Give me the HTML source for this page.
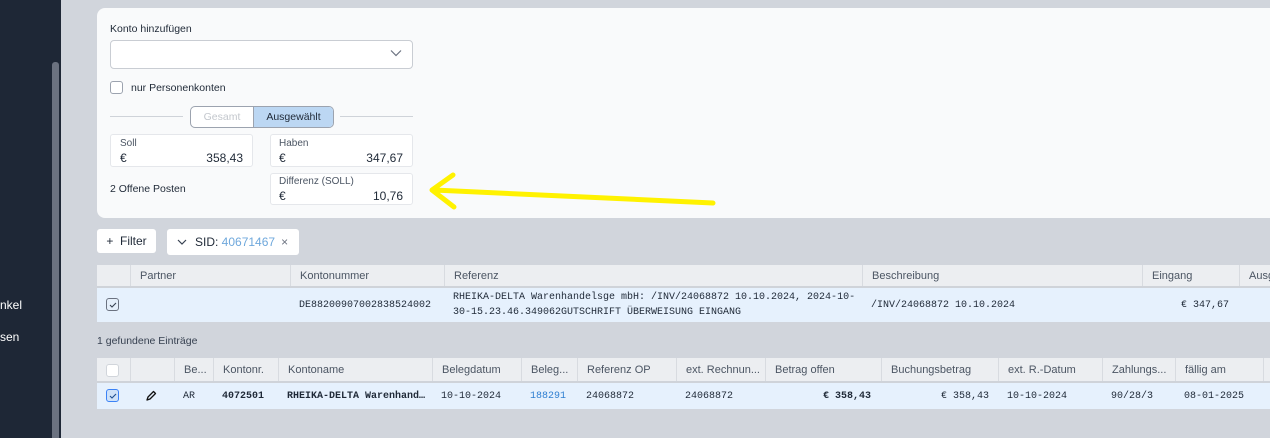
<!DOCTYPE html>
<html><head><meta charset="utf-8"><style>
*{box-sizing:border-box;margin:0;padding:0}
body{width:1270px;height:438px;overflow:hidden;background:#d1d5dc;font-family:"Liberation Sans",sans-serif;font-size:11px;color:#1f2937;position:relative}
.a{position:absolute}
.mono{font-family:"Liberation Mono",monospace;font-size:10px}
.sb{left:0;top:0;width:61px;height:438px;background:#1e2736}
.card{left:97px;top:8px;width:1190px;height:210px;background:#f9fafb;border-radius:8px}
.box{background:#fff;border:1px solid #e5e7eb;border-radius:3px}
.cb{width:13px;height:13px;border:1px solid #9ca3af;border-radius:3px;background:#fff}
.cb.on{background:#e5effa;border-color:#6b7280}
.th{background:#eceef1;border-bottom:2px solid #cfd3d9;height:100%}
.cell{position:absolute;top:0;height:100%;border-left:1px solid #d8dbe0;padding-left:9px;display:flex;align-items:center;color:#4b5563}
.row{background:#e6f1fd}
.rc{position:absolute;top:0;height:100%;display:flex;align-items:center;padding-left:9px}
</style></head><body>
<div class="a sb"></div>
<div class="a" style="left:52px;top:62px;width:7px;height:376px;background:#6b7280;border-radius:3px 3px 0 0"></div>
<div class="a" style="left:0;top:298px;color:#fff;font-size:12px">nkel</div>
<div class="a" style="left:0;top:330px;color:#fff;font-size:12px">sen</div>

<div class="a card"></div>
<div class="a" style="left:110px;top:23px;font-size:10.5px">Konto hinzufügen</div>
<div class="a box" style="left:110px;top:40px;width:303px;height:29px;border-color:#c9cdd3;border-radius:4px"></div>
<svg class="a" style="left:390px;top:49px" width="12" height="8"><path d="M1 1.5L6 6.5L11 1.5" fill="none" stroke="#6b7280" stroke-width="1.2"/></svg>
<div class="a cb" style="left:110px;top:81px"></div>
<div class="a" style="left:131px;top:82px;font-size:10.5px">nur Personenkonten</div>
<div class="a" style="left:110px;top:116px;width:73px;height:1px;background:#cfd3d9"></div>
<div class="a" style="left:340px;top:116px;width:73px;height:1px;background:#cfd3d9"></div>
<div class="a" style="left:190px;top:106px;width:144px;height:22px;border:1px solid #9ca3af;border-radius:5px;background:#fff;overflow:hidden;display:flex;font-size:10.5px">
<div style="width:62px;display:flex;align-items:center;justify-content:center;color:#c3c7cd">Gesamt</div>
<div style="flex:1;display:flex;align-items:center;justify-content:center;background:#bcd7f3;border-left:1px solid #9ca3af">Ausgewählt</div></div>
<div class="a box" style="left:110px;top:134px;width:143px;height:33px"></div>
<div class="a" style="left:120px;top:138px;font-size:10px;color:#4b5563">Soll</div>
<div class="a" style="left:120px;top:151px;font-size:12px">€</div>
<div class="a" style="left:180px;top:151px;width:63px;text-align:right;font-size:12px">358,43</div>
<div class="a box" style="left:270px;top:134px;width:143px;height:33px"></div>
<div class="a" style="left:279px;top:138px;font-size:10px;color:#4b5563">Haben</div>
<div class="a" style="left:279px;top:151px;font-size:12px">€</div>
<div class="a" style="left:340px;top:151px;width:63px;text-align:right;font-size:12px">347,67</div>
<div class="a box" style="left:270px;top:173px;width:143px;height:32px"></div>
<div class="a" style="left:279px;top:176px;font-size:10px;color:#4b5563">Differenz (SOLL)</div>
<div class="a" style="left:279px;top:189px;font-size:12px">€</div>
<div class="a" style="left:340px;top:189px;width:63px;text-align:right;font-size:12px">10,76</div>
<div class="a" style="left:110px;top:183px;font-size:10.5px">2 Offene Posten</div>
<svg class="a" style="left:420px;top:170px" width="300" height="45"><path d="M293 33L14 20M33 5L12 20L34 37" fill="none" stroke="#fff200" stroke-width="5" stroke-linecap="round" stroke-linejoin="round"/></svg>

<div class="a" style="left:97px;top:229px;width:59px;height:24px;background:#fff;border-radius:3px;display:flex;align-items:center;justify-content:center;font-size:12px">+&nbsp;&nbsp;Filter</div>
<div class="a" style="left:167px;top:229px;width:132px;height:26px;background:#fff;border-radius:3px;display:flex;align-items:center;padding-left:10px;font-size:12px"><svg width="10" height="7" style="margin-right:8px"><path d="M1 1L5 5L9 1" fill="none" stroke="#374151" stroke-width="1.2"/></svg>SID:&nbsp;<span style="color:#6fa8dc">40671467</span><span style="margin-left:6px;color:#6b7280">×</span></div>

<div class="a th" style="left:97px;top:265px;width:1173px;height:23px">
<div class="cell" style="left:33px">Partner</div><div class="cell" style="left:193px">Kontonummer</div><div class="cell" style="left:347px">Referenz</div><div class="cell" style="left:765px">Beschreibung</div><div class="cell" style="left:1045px">Eingang</div><div class="cell" style="left:1142px">Ausg</div></div>
<div class="a row" style="left:97px;top:288px;width:1173px;height:34px">
<div class="a cb on" style="left:9px;top:10px"></div><svg class="a" style="left:12px;top:14px" width="8" height="6"><path d="M1 3L3 5L7 1" fill="none" stroke="#374151" stroke-width="1.1"/></svg>
<div class="rc mono" style="left:193px">DE88200907002838524002</div>
<div class="rc mono" style="left:347px;line-height:15px">RHEIKA-DELTA Warenhandelsge mbH: /INV/24068872 10.10.2024, 2024-10-<br>30-15.23.46.349062GUTSCHRIFT ÜBERWEISUNG EINGANG</div>
<div class="rc mono" style="left:765px">/INV/24068872 10.10.2024</div>
<div class="rc mono" style="left:1075px">€ 347,67</div></div>

<div class="a" style="left:97px;top:335px;font-size:10.5px;color:#374151">1 gefundene Einträge</div>

<div class="a th" style="left:97px;top:358px;width:1173px;height:25px">
<div class="a cb" style="left:9px;top:6px;border-color:#d1d5db"></div>
<div class="cell" style="left:33px"></div><div class="cell" style="left:77px">Be...</div><div class="cell" style="left:116px">Kontonr.</div><div class="cell" style="left:181px">Kontoname</div><div class="cell" style="left:335px">Belegdatum</div><div class="cell" style="left:424px">Beleg...</div><div class="cell" style="left:480px">Referenz OP</div><div class="cell" style="left:579px">ext. Rechnun...</div><div class="cell" style="left:668px">Betrag offen</div><div class="cell" style="left:784px">Buchungsbetrag</div><div class="cell" style="left:901px">ext. R.-Datum</div><div class="cell" style="left:1005px">Zahlungs...</div><div class="cell" style="left:1078px">fällig am</div><div class="cell" style="left:1166px"></div></div>
<div class="a row" style="left:97px;top:383px;width:1173px;height:26px">
<div class="a cb on" style="left:9px;top:6px;border-color:#3b82f6;background:#cfe2f8"></div><svg class="a" style="left:12px;top:10px" width="8" height="6"><path d="M1 3L3 5L7 1" fill="none" stroke="#1f4f8f" stroke-width="1.1"/></svg>
<svg class="a" style="left:48px;top:7px" width="12" height="12"><path d="M2 10L3 7L8.5 1.5L10.5 3.5L5 9Z" fill="none" stroke="#111" stroke-width="1.3" stroke-linejoin="round"/></svg>
<div class="rc mono" style="left:77px">AR</div>
<div class="rc mono" style="left:116px;font-weight:bold">4072501</div>
<div class="rc mono" style="left:181px;font-weight:bold">RHEIKA-DELTA Warenhand…</div>
<div class="rc mono" style="left:335px">10-10-2024</div>
<div class="rc mono" style="left:424px;color:#2f7fd1">188291</div>
<div class="rc mono" style="left:480px">24068872</div>
<div class="rc mono" style="left:579px">24068872</div>
<div class="rc mono" style="left:717px;font-weight:bold">€ 358,43</div>
<div class="rc mono" style="left:835px">€ 358,43</div>
<div class="rc mono" style="left:901px">10-10-2024</div>
<div class="rc mono" style="left:1005px">90/28/3</div>
<div class="rc mono" style="left:1078px">08-01-2025</div></div>
</body></html>
